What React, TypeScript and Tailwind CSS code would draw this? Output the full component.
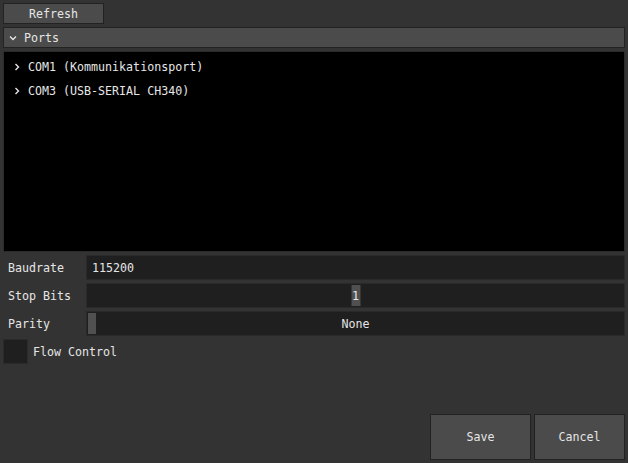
import React from "react";

const font = { fontFamily: '"DejaVu Sans Mono", "Liberation Mono", monospace' };

function Chevron({ down }: { down?: boolean }) {
  return down ? (
    <svg width="8" height="6" viewBox="0 0 8 6" className="shrink-0">
      <path d="M1 1.5 L4 4.5 L7 1.5" stroke="#e6e6e6" strokeWidth="1.4" fill="none" />
    </svg>
  ) : (
    <svg width="6" height="8" viewBox="0 0 6 8" className="shrink-0">
      <path d="M1.5 1 L4.5 4 L1.5 7" stroke="#e6e6e6" strokeWidth="1.4" fill="none" />
    </svg>
  );
}

function T({ children, className = "" }: { children: React.ReactNode; className?: string }) {
  return <span className={"relative top-[1px] " + className}>{children}</span>;
}

function Row({ label, children }: { label: string; children: React.ReactNode }) {
  return (
    <div className="flex h-[25px] items-stretch">
      <div className="w-[83px] shrink-0 pl-[5px] flex items-center">
        <T>{label}</T>
      </div>
      <div className="flex-1 bg-[#1f1f1f] border border-[#2a2a2a] relative flex items-center">{children}</div>
    </div>
  );
}

export default function App() {
  return (
    <div
      style={font}
      className="w-[628px] h-[463px] bg-[#333333] text-[#e6e6e6] text-[11.65px] leading-none p-[3px] flex flex-col gap-[3px] overflow-hidden"
    >
      <div className="w-[101px] h-[21px] bg-[#4b4b4b] border border-[#222] flex items-center justify-center">
        <T>Refresh</T>
      </div>
      <div className="h-[21px] bg-[#4b4b4b] border border-[#222] flex items-center gap-[7px] pl-[5px]">
        <Chevron down />
        <T>Ports</T>
      </div>
      <div className="h-[201px] bg-black border border-[#2b2b2b] pt-[3px]">
        {["COM1 (Kommunikationsport)", "COM3 (USB-SERIAL CH340)"].map((t) => (
          <div key={t} className="h-[24px] flex items-center pl-[10px] gap-[8px]">
            <Chevron />
            <T>{t}</T>
          </div>
        ))}
      </div>
      <Row label="Baudrate">
        <T className="pl-[5px]">115200</T>
      </Row>
      <Row label="Stop Bits">
        <div className="absolute left-1/2 -translate-x-1/2 top-[1px] bottom-[1px] w-[9px] bg-[#505050]" />
        <T className="w-full text-center">1</T>
      </Row>
      <Row label="Parity">
        <div className="absolute left-[1px] top-[1px] bottom-[1px] w-[8px] bg-[#505050]" />
        <T className="w-full text-center">None</T>
      </Row>
      <div className="flex h-[25px] items-center gap-[5px]">
        <div className="w-[25px] h-[25px] bg-[#1f1f1f] border border-[#2a2a2a]" />
        <T>Flow Control</T>
      </div>
      <div className="flex-1" />
      <div className="flex justify-end gap-[3px] h-[46px]">
        <div className="w-[101px] bg-[#4b4b4b] border border-[#222] flex items-center justify-center">
          <T>Save</T>
        </div>
        <div className="w-[91px] bg-[#4b4b4b] border border-[#222] flex items-center justify-center">
          <T>Cancel</T>
        </div>
      </div>
    </div>
  );
}
